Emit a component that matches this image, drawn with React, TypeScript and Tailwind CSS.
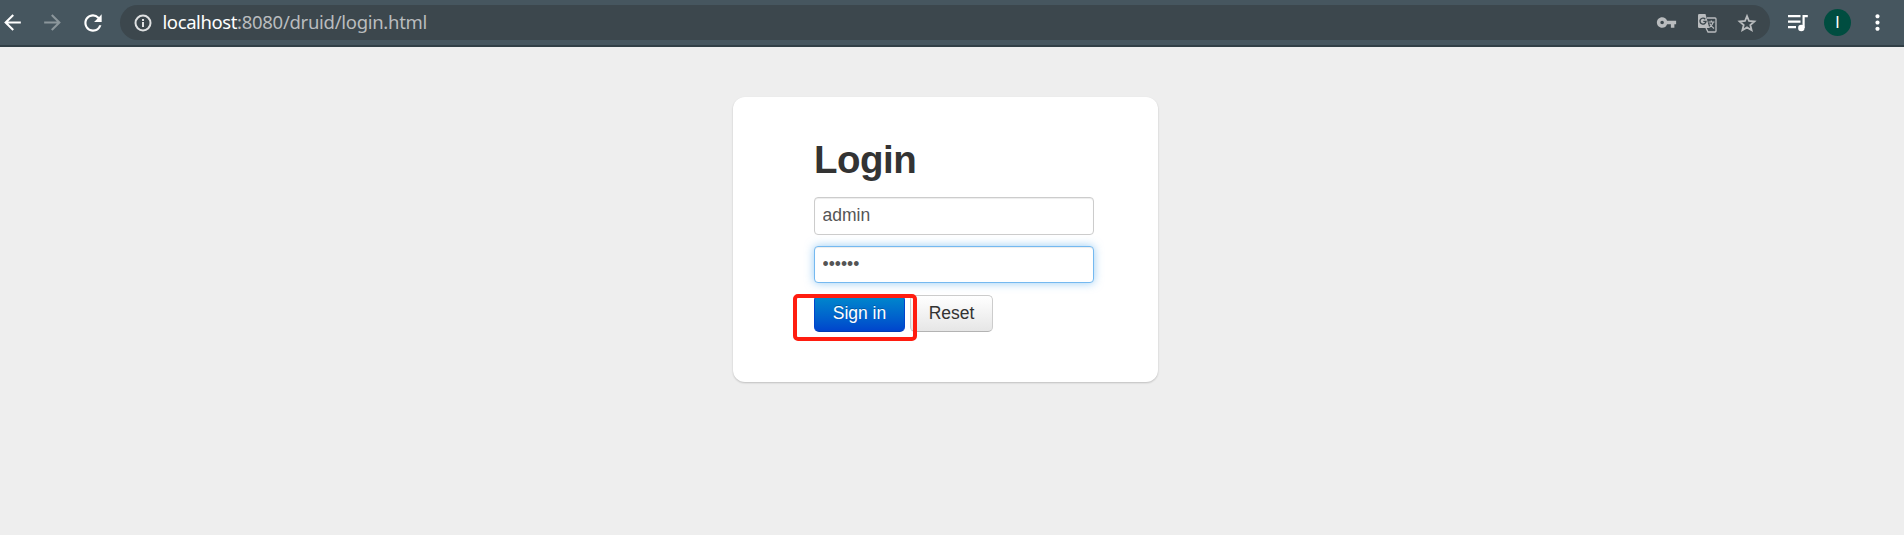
import React from "react";
import {
  MdArrowBack,
  MdArrowForward,
  MdRefresh,
  MdVpnKey,
  MdMoreVert,
} from "react-icons/md";

function InfoIcon() {
  return (
    <svg viewBox="0 0 18 18" className="size-[18px] shrink-0" fill="none" stroke="#dfe1e2" strokeWidth="2">
      <circle cx="9" cy="9" r="7.5" />
      <path d="M9 8v5M9 5v2" />
    </svg>
  );
}

function TranslateIcon() {
  return (
    <svg viewBox="0 0 20 20" className="size-[20px] shrink-0" fill="none">
      <path d="M10 5h8q1 0 1 1v12q0 1-1 1h-7l-2-4" stroke="currentColor" strokeWidth="1.3" />
      <path d="M2.200 1h6.300l3.800 14H2.200Q1 15 1 13.800V2.200Q1 1 2.200 1Z" fill="currentColor" />
      <path d="M8.300 6.200A3 3 0 1 0 9 8.400H6.300" stroke="#3c474d" strokeWidth="1.400" />
      <path d="M11.500 9h6M14.300 7.500V9M16.300 9.200q-.8 3-4 5.300M12.700 10.500q1.200 2.500 4.300 5" stroke="currentColor" strokeWidth="1.200" />
    </svg>
  );
}

function StarIcon() {
  return (
    <svg viewBox="0 0 20 20" className="size-[20px] shrink-0" fill="none" stroke="currentColor" strokeWidth="1.800">
      <path d="m10 3.200 2 4.800 5.400.500-4.100 3.500 1.300 5.200L10 14.400l-4.600 2.800 1.300-5.200-4.100-3.500L8 8Z" />
    </svg>
  );
}

function PlaylistIcon() {
  return (
    <svg viewBox="0 0 20 18" className="h-[18px] w-[20px] shrink-0" fill="none" stroke="currentColor" strokeWidth="2.200">
      <path d="M0 2.100h12.500M0 7.600h12.500M0 13.100h8M15.600 14V2.100h4.200" />
      <circle cx="13.300" cy="14" r="3.200" fill="currentColor" stroke="none" />
    </svg>
  );
}

function Toolbar() {
  return (
    <header className="flex h-[47px] items-center border-b-2 border-[#313f46] bg-[#46565f] text-white">
      <MdArrowBack className="size-[25px] shrink-0" />
      <MdArrowForward className="ml-[15px] size-[25px] shrink-0 text-[#8b969b]" />
      <MdRefresh className="ml-[15px] size-[26px] shrink-0" />
      <div className="ml-[14px] flex h-[35px] w-[1650px] shrink-0 items-center rounded-full bg-[#3c474d] pr-[13px] pl-[13.5px] text-[#b9bcbe]">
        <InfoIcon />
        <div className="ml-[11px] h-[35px] flex-1 font-['Noto_Sans',sans-serif] text-[18.5px] leading-[33px] tracking-[-0.29px] whitespace-nowrap">
          <span className="tracking-[-0.4px] text-white">localhost</span>:8080/druid/login.html
        </div>
        <MdVpnKey className="size-[21px]" />
        <div className="ml-[20px]">
          <TranslateIcon />
        </div>
        <div className="ml-[20px]">
          <StarIcon />
        </div>
      </div>
      <div className="ml-[18px]">
        <PlaylistIcon />
      </div>
      <div className="ml-[16px] flex size-[27px] shrink-0 items-center justify-center rounded-full bg-[#004d40] font-[Roboto,sans-serif] text-[16px]">
        I
      </div>
      <MdMoreVert className="ml-[14px] size-[25px] shrink-0" />
    </header>
  );
}

const field =
  "block w-[280px] rounded-[4px] border bg-white px-[7.5px] text-[17.5px] text-[#555] outline-none";

function LoginCard() {
  return (
    <form className="mt-[50px] ml-[733px] h-[285px] w-[425px] rounded-[12px] bg-white pt-[38px] pl-[81px] shadow-[0_1px_2px_rgba(0,0,0,0.2)]">
      <h1 className="text-[38.5px] leading-[50px] font-bold tracking-[-0.5px] text-[#333]">Login</h1>
      <input
        type="text"
        defaultValue="admin"
        className={`${field} mt-[12px] h-[38px] border-[#ccc] pb-[2px] shadow-[inset_0_1px_1px_rgba(0,0,0,0.075)]`}
      />
      <input
        type="password"
        defaultValue="123456"
        className={`${field} mt-[11px] h-[37px] border-[#75b9f0] shadow-[inset_0_1px_1px_rgba(0,0,0,0.075),0_0_10px_rgba(82,168,236,0.6)]`}
      />
      <div className="relative mt-[12px] flex gap-[5px] text-[17.5px]">
        <button
          type="button"
          className="h-[37px] w-[91px] rounded-[5px] border border-[#04c] border-b-[#003bb3] bg-linear-to-b from-[#08c] to-[#04c] text-white [text-shadow:0_-1px_0_rgba(0,0,0,0.25)]"
        >
          Sign in
        </button>
        <button
          type="reset"
          className="h-[37px] w-[83px] rounded-[5px] border border-[#ccc] border-b-[#b3b3b3] bg-linear-to-b from-white to-[#e6e6e6] text-[#333]"
        >
          Reset
        </button>
        <div className="pointer-events-none absolute top-[-1.5px] left-[-21.5px] h-[47.5px] w-[124px] rounded-[5px] border-4 border-[#ff1d10]" />
      </div>
    </form>
  );
}

export default function App() {
  return (
    <div className="h-[535px] overflow-hidden bg-[#eee] font-['Liberation_Sans',Arial,sans-serif]">
      <Toolbar />
      <LoginCard />
    </div>
  );
}
